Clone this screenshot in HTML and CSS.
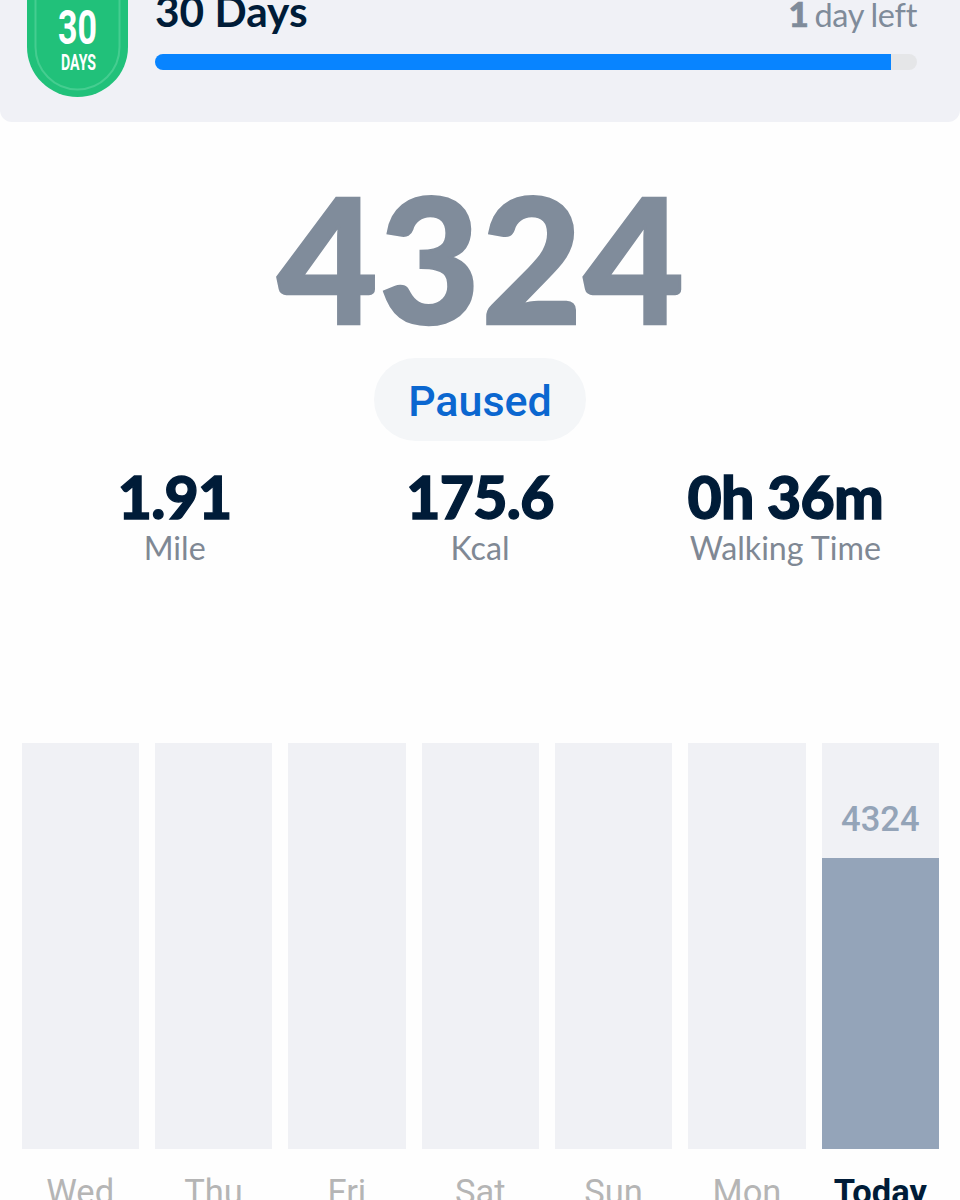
FILE: index.html
```
<!DOCTYPE html>
<html lang="en">
<head>
    <meta charset="UTF-8">
    <meta name="viewport" content="width=device-width, initial-scale=1.0">
    <title>Step Counter</title>
    <link rel="stylesheet" href="styles.css">
</head>
<body>
    <!-- Challenge -->
    <div class="challenge">
        <svg class="badge" width="101" height="97" viewBox="0 0 101 97">
            <path d="M0 0H101V47A50.5 50 0 0 1 0 47Z" fill="#21c17a"/>
            <path d="M8.5 -2V47A42 42.5 0 0 0 92.5 47V-2" fill="none" stroke="#45cd90" stroke-width="2"/>
            <text class="badge-number" x="31" y="44" textLength="39" lengthAdjust="spacingAndGlyphs">30</text>
            <text class="badge-unit" x="34" y="70" textLength="35" lengthAdjust="spacingAndGlyphs">DAYS</text>
        </svg>
        <div class="challenge-info">
            <div class="challenge-row">
                <span class="challenge-title">30 Days</span>
                <span class="challenge-left"><strong>1</strong> day left</span>
            </div>
            <div class="progress">
                <div class="progress-fill" style="width: 96.65%"></div>
            </div>
        </div>
    </div>

    <!-- Steps -->
    <div class="steps">4324</div>
    <div class="status">Paused</div>

    <div class="stats">
        <div class="stat">
            <div class="stat-value">1.91</div>
            <div class="stat-label">Mile</div>
        </div>
        <div class="stat">
            <div class="stat-value">175.6</div>
            <div class="stat-label">Kcal</div>
        </div>
        <div class="stat">
            <div class="stat-value">0h 36m</div>
            <div class="stat-label">Walking Time</div>
        </div>
    </div>

    <!-- Week -->
    <div class="chart">
        <div class="day">
            <div class="bar"></div>
            <div class="day-name">Wed</div>
        </div>
        <div class="day">
            <div class="bar"></div>
            <div class="day-name">Thu</div>
        </div>
        <div class="day">
            <div class="bar"></div>
            <div class="day-name">Fri</div>
        </div>
        <div class="day">
            <div class="bar"></div>
            <div class="day-name">Sat</div>
        </div>
        <div class="day">
            <div class="bar"></div>
            <div class="day-name">Sun</div>
        </div>
        <div class="day">
            <div class="bar"></div>
            <div class="day-name">Mon</div>
        </div>
        <div class="day today">
            <div class="bar">
                <div class="bar-value">4324</div>
                <div class="bar-fill" style="height: 71.6%"></div>
            </div>
            <div class="day-name">Today</div>
        </div>
    </div>
</body>
</html>
```
FILE: styles.css
```
* {
    box-sizing: border-box;
}

body {
    margin: 0;
    width: 960px;
    height: 1200px;
    overflow: hidden;
    background-color: #fefefe;
    font-family: Lato, sans-serif;
    color: #001c38;
}

.challenge {
    display: flex;
    align-items: flex-start;
    gap: 27px;
    height: 122px;
    padding: 0 43px 0 27px;
    background-color: #f0f1f6;
    border-radius: 0 0 12px 12px;
}

.badge {
    flex: none;
}

.badge-number,
.badge-unit {
    font-family: Roboto, sans-serif;
    font-weight: 700;
    fill: #fff;
}

.badge-number {
    font-size: 49px;
}

.badge-unit {
    font-size: 21.5px;
}

.challenge-info {
    flex: 1;
}

.challenge-row {
    display: flex;
    justify-content: space-between;
    align-items: baseline;
    height: 61px;
    margin-top: -7px;
    line-height: 35px;
}

.challenge-title {
    font-size: 42.4px;
    font-weight: 700;
}

.challenge-left {
    font-size: 32.5px;
    letter-spacing: -0.3px;
    word-spacing: -1px;
    color: #7f8b9a;
}

.challenge-left strong {
    margin-right: -1px;
    font-size: 35px;
    font-weight: 900;
    -webkit-text-stroke: 0.7px;
}

.progress {
    height: 16px;
    border-radius: 8px;
    background-color: #e5e6e8;
    overflow: hidden;
}

.progress-fill {
    height: 100%;
    background-color: #0884ff;
}

/* The stroke makes the digits heavier than the bold face */
.steps {
    margin-top: 47px;
    padding-left: 3px;
    font-size: 173.5px;
    line-height: 177px;
    height: 176px;
    letter-spacing: 1.5px;
    font-weight: 900;
    -webkit-text-stroke: 2.5px;
    text-align: center;
    color: #808c9b;
}

.status {
    width: 212px;
    height: 83px;
    margin: 13px auto 25px;
    border-radius: 42px;
    background-color: #f4f6f8;
    font-family: Roboto, sans-serif;
    font-size: 43px;
    line-height: 86px;
    font-weight: 500;
    text-align: center;
    color: #0b67d0;
}

.stats {
    display: grid;
    grid-template-columns: repeat(3, 1fr);
    padding: 0 22px;
    text-align: center;
}

.stat-value {
    font-size: 59px;
    line-height: 62px;
    height: 60px;
    letter-spacing: -0.7px;
    font-weight: 900;
    -webkit-text-stroke: 1.3px;
}

.stat-label {
    margin-top: 6px;
    font-size: 32.2px;
    line-height: 32px;
    color: #7f8894;
}

.chart {
    display: grid;
    grid-template-columns: repeat(7, 1fr);
    gap: 16px;
    margin-top: 179px;
    padding: 0 21px 0 21.5px;
    font-family: Roboto, sans-serif;
    text-align: center;
}

.bar {
    display: flex;
    flex-direction: column;
    justify-content: flex-end;
    height: 406px;
    background-color: #f0f1f5;
}

.bar-value {
    margin-bottom: 20px;
    font-size: 34.5px;
    line-height: 38px;
    font-weight: 500;
    color: #94a4b8;
}

.bar-fill {
    background-color: #94a4b9;
}

.day-name {
    margin-top: 23px;
    font-size: 34.5px;
    line-height: 40px;
    color: #b5b5b5;
}

.today .day-name {
    font-weight: 700;
    color: #001c38;
}
```
